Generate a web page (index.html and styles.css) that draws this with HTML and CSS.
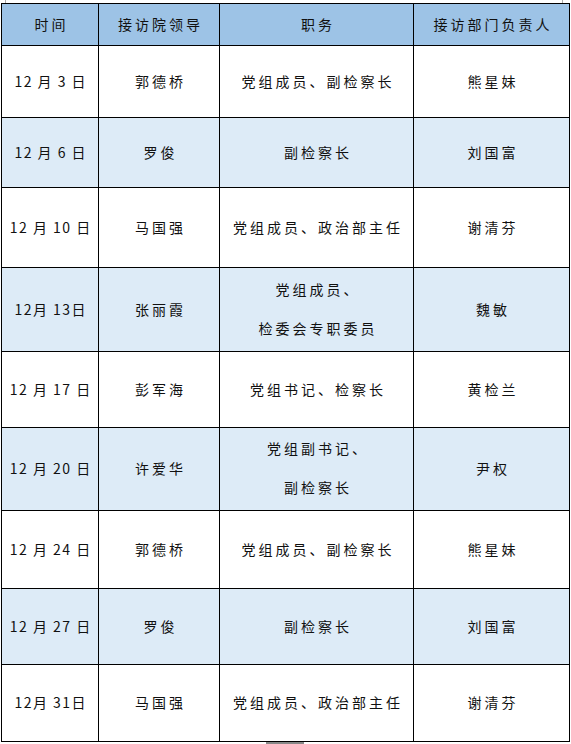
FILE: index.html
```html
<!DOCTYPE html>
<html lang="zh-CN">
<head>
<meta charset="utf-8">
<title>接访安排</title>
<link rel="stylesheet" href="styles.css">
</head>
<body>
<div class="page">
  <span class="mark mark-tl"></span>
  <span class="mark mark-tr"></span>
  <table class="schedule">
    <colgroup>
      <col class="c1"><col class="c2"><col class="c3"><col class="c4">
    </colgroup>
    <thead>
      <tr class="head"><th>时间</th><th>接访院领导</th><th>职务</th><th>接访部门负责人</th></tr>
    </thead>
    <tbody>
      <tr class="r1"><td class="date">12 月 3 日</td><td>郭德桥</td><td>党组成员、副检察长</td><td>熊星妹</td></tr>
      <tr class="r2 alt"><td class="date">12 月 6 日</td><td>罗俊</td><td>副检察长</td><td>刘国富</td></tr>
      <tr class="r3"><td class="date">12 月 10 日</td><td>马国强</td><td>党组成员、政治部主任</td><td>谢清芬</td></tr>
      <tr class="r4 alt"><td class="date">12月 13日</td><td>张丽霞</td><td class="two"><div>党组成员、</div><div>检委会专职委员</div></td><td>魏敏</td></tr>
      <tr class="r5"><td class="date">12 月 17 日</td><td>彭军海</td><td>党组书记、检察长</td><td>黄检兰</td></tr>
      <tr class="r6 alt"><td class="date">12 月 20 日</td><td>许爱华</td><td class="two"><div>党组副书记、</div><div>副检察长</div></td><td>尹权</td></tr>
      <tr class="r7"><td class="date">12 月 24 日</td><td>郭德桥</td><td>党组成员、副检察长</td><td>熊星妹</td></tr>
      <tr class="r8 alt"><td class="date">12 月 27 日</td><td>罗俊</td><td>副检察长</td><td>刘国富</td></tr>
      <tr class="r9"><td class="date">12月 31日</td><td>马国强</td><td>党组成员、政治部主任</td><td>谢清芬</td></tr>
    </tbody>
  </table>
  <span class="mark-bottom"></span>
</div>
</body>
</html>
```
FILE: styles.css
```css
html, body {
  margin: 0;
  padding: 0;
  background: #fff;
}
.page {
  position: relative;
  width: 571px;
  height: 744px;
  padding: 3px 0 0 1px;
  box-sizing: border-box;
  font-family: "Noto Sans CJK SC", "Noto Sans", sans-serif;
  color: #111;
}
.mark {
  position: absolute;
  top: 0;
  width: 1px;
  height: 3px;
  background: #aaa;
}
.mark-tl { left: 5px; }
.mark-tr { left: 562px; }
.mark-bottom {
  position: absolute;
  left: 266px;
  top: 742px;
  width: 38px;
  height: 2px;
  background: #888;
}
.schedule {
  border-collapse: collapse;
  table-layout: fixed;
  width: 569px;
}
.c1 { width: 97px; }
.c2 { width: 121px; }
.c3 { width: 194px; }
.c4 { width: 156px; }
.schedule th,
.schedule td {
  border: 1px solid #000;
  padding: 0 0 2px 0;
  text-align: center;
  vertical-align: middle;
  font-size: 14px;
  font-weight: normal;
  letter-spacing: 3px;
  text-indent: 3px;
  line-height: 20px;
}
.schedule td.date {
  white-space: nowrap;
  letter-spacing: 1.5px;
  text-indent: 1.5px;
}
.head { background: #9dc3e6; height: 42px; }
.alt { background: #ddebf7; }
.r1 { height: 72px; }
.r2 { height: 70px; }
.r3 { height: 80px; }
.r4 { height: 84px; }
.r5 { height: 76px; }
.r6 { height: 83px; }
.r7 { height: 78px; }
.r8 { height: 76px; }
.r9 { height: 77px; }
.two div { line-height: 39px; }
```
